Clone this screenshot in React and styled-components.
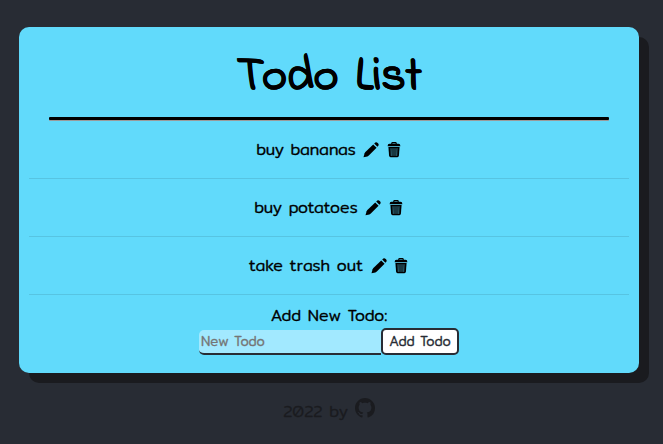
import React from 'react';
import styled, { createGlobalStyle } from 'styled-components';
import { BsGithub } from 'react-icons/bs';

const GlobalStyle = createGlobalStyle`
  * { box-sizing: border-box; }
  body {
    margin: 0;
    height: 444px;
    overflow: hidden;
    background: #282c34;
    color: #000;
    font-family: Mitr, "Noto Sans", sans-serif;
    font-size: 16px;
    font-weight: 300;
    -webkit-text-stroke: 0.3px currentColor;
  }
`;

const Page = styled.div`
  display: flex;
  flex-direction: column;
  height: 444px;
  padding: 27px 24px 0 19px;
`;

const Card = styled.main`
  display: flex;
  flex-direction: column;
  width: 620px;
  height: 346px;
  padding: 0 10px;
  border-radius: 10px;
  background: #61dafb;
  box-shadow: 10px 10px 0 #1a1b1f;
`;

const Title = styled.h1`
  margin: 0 20px;
  height: 90px;
  padding-top: 19px;
  font-family: "Indie Flower", cursive;
  font-size: 48px;
  font-weight: 700;
  line-height: 62px;
  letter-spacing: -0.2px;
  word-spacing: 5px;
  text-align: center;
  -webkit-text-stroke: 0.2px currentColor;
`;

const Rule = styled.hr`
  width: 560px;
  height: 3px;
  margin: 0 20px 1px;
  border: 0;
  border-radius: 1px;
  background: #000;
  box-shadow: 0 1px 0 #9a9a9a;
`;

const List = styled.ul`
  margin: 0;
  padding: 0;
  list-style: none;
`;

const Item = styled.li`
  display: flex;
  justify-content: center;
  align-items: center;
  height: 58px;
  border-bottom: 1px solid #57c4e2;
  line-height: 22px;
`;

const ItemText = styled.span`
  margin-right: 7.5px;
  white-space: nowrap;
`;

const IconButton = styled.button`
  display: flex;
  width: 16px;
  height: 16px;
  padding: 0;
  border: 0;
  background: none;
  color: #000;
  & + & { margin-left: 6.5px; }
`;

const Form = styled.form`
  display: flex;
  flex-direction: column;
  align-items: center;
  padding-top: 10px;
`;

const Label = styled.label`
  height: 23px;
  line-height: 22px;
`;

const Controls = styled.div`
  display: flex;
  align-items: flex-end;
`;

const Input = styled.input`
  width: 182px;
  height: 25px;
  padding: 0 2px;
  border: 0;
  border-bottom: 2px solid #282c34;
  border-radius: 5px 0 0 5px;
  outline: 0;
  background: #a2e9ff;
  font: 300 13.333px Mitr, "Noto Sans", sans-serif;
  &::placeholder { color: #757575; opacity: 1; }
`;

const AddButton = styled.button`
  width: 78px;
  height: 27px;
  padding: 0;
  border: 2px solid #282c34;
  border-radius: 5px;
  background: #fff;
  color: #282c34;
  font: 300 13.333px Mitr, "Noto Sans", sans-serif;
`;

const Footer = styled.footer`
  display: flex;
  justify-content: center;
  width: 620px;
  margin-top: 25px;
  gap: 7px;
  color: #1a1b1f;
  line-height: 27px;
`;

const PencilIcon = () => (
  <svg width="16" height="16" viewBox="0 0 16 16" fill="currentColor">
    <path d="M0.5 15.3 1.6 11.2Q1.8 10.5 2.4 9.9L10.2 2.4 13.6 5.8 5.8 13.6Q5.2 14.2 4.4 14.4Z" />
    <path d="M11.2 1.6 12.3.6Q13.5-.2 14.7 1L15 1.3Q16.2 2.6 15.3 3.8L14.4 4.8Z" />
  </svg>
);

const TrashIcon = () => (
  <svg width="16" height="16" viewBox="0 0 16 16" fill="currentColor">
    <path d="M5.2 1.8V1.2Q5.4.1 6.4.1H9.6Q10.6.1 10.8 1.2V1.8H12.5Q14.4 1.8 14.4 4.2H1.6Q1.6 1.8 3.5 1.8ZM6.4 1.8H9.6V1.2H6.4Z" />
    <path d="M2.4 4.9H13.6L12.9 13.8Q12.7 15.2 11.4 15.2H4.6Q3.3 15.2 3.1 13.8Z" />
    <path d="M5 6.2 5.3 13.9M7 6.2V13.9M9 6.2V13.9M11 6.2 10.7 13.9" fill="none" stroke="#3c879c" strokeWidth="0.85" />
  </svg>
);

const todos = ['buy bananas', 'buy potatoes', 'take trash out'];

export default function App() {
  return (
    <Page>
      <GlobalStyle />
      <Card>
        <Title>Todo List</Title>
        <Rule />
        <List>
          {todos.map((text) => (
            <Item key={text}>
              <ItemText>{text}</ItemText>
              <IconButton type="button" aria-label="Edit"><PencilIcon /></IconButton>
              <IconButton type="button" aria-label="Delete"><TrashIcon /></IconButton>
            </Item>
          ))}
        </List>
        <Form>
          <Label htmlFor="todo">Add New Todo:</Label>
          <Controls>
            <Input id="todo" placeholder="New Todo" />
            <AddButton type="button">Add Todo</AddButton>
          </Controls>
        </Form>
      </Card>
      <Footer>2022 by <BsGithub size={20} /></Footer>
    </Page>
  );
}
